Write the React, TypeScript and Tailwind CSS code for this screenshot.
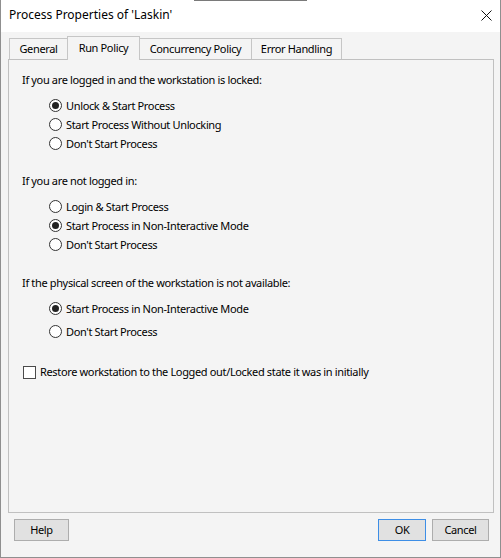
import React from "react";

function Radio({ label, checked, h }: { label: string; checked?: boolean; h: string }) {
  return (
    <div className={`flex items-center pl-[27px] gap-[4px] ${h}`}>
      <span className="w-[13px] h-[13px] rounded-full border border-[#333333] bg-white flex items-center justify-center shrink-0">
        {checked && <span className="w-[7px] h-[7px] rounded-full bg-[#222222]" />}
      </span>
      <span>{label}</span>
    </div>
  );
}

function Tab({ label, w, selected, first }: { label: string; w: string; selected?: boolean; first?: boolean }) {
  return (
    <div
      className={`${w} ${first ? "" : "-ml-px"} border border-b-0 border-[#c6c6c6] bg-[#f4f4f4] flex items-center justify-center ${
        selected ? "h-[24px] mb-[-1px] relative z-10 pb-[2px]" : "h-[21px]"
      }`}
    >
      {label}
    </div>
  );
}

export default function App() {
  return (
    <div className="w-[501px] h-[558px] relative flex flex-col bg-[#f4f4f4] border-x border-b border-[#8f8f8f] font-['Noto_Sans',sans-serif] text-[11px] tracking-[-0.35px] text-black leading-[16px]">
      <div className="absolute top-0 left-[193px] w-[113px] h-px bg-[#7a7a7a]" />
      <div className="h-[32px] bg-white flex items-center justify-between pl-[8px] pr-[8px] shrink-0 text-[12px] tracking-normal">
        <span className="-mt-[2px]">Process Properties of 'Laskin'</span>
        <svg width="11" height="11" viewBox="0 0 11 11" className="-mt-[1px]">
          <path d="M0.5 0.5 L10.5 10.5 M10.5 0.5 L0.5 10.5" stroke="#111" strokeWidth="1" />
        </svg>
      </div>
      <div className="flex flex-col pl-[7px]">
        <div className="h-[27px] pt-[4px] flex items-end pl-[1px]">
          <Tab label="General" w="w-[59px]" first />
          <Tab label="Run Policy" w="w-[73px]" selected />
          <Tab label="Concurrency Policy" w="w-[113px]" />
          <Tab label="Error Handling" w="w-[91px]" />
        </div>
        <div className="w-[486px] h-[454px] border border-[#c0c0c0] pl-[13px] pt-[10px] flex flex-col">
          <div className="h-[20px] flex items-center">If you are logged in and the workstation is locked:</div>
          <div className="mt-[6px] flex flex-col">
            <Radio h="h-[19px]" label="Unlock & Start Process" checked />
            <Radio h="h-[19px]" label="Start Process Without Unlocking" />
            <Radio h="h-[19px]" label="Don't Start Process" />
          </div>
          <div className="mt-[18px] h-[20px] flex items-center">If you are not logged in:</div>
          <div className="mt-[6px] flex flex-col">
            <Radio h="h-[19px]" label="Login & Start Process" />
            <Radio h="h-[19px]" label="Start Process in Non-Interactive Mode" checked />
            <Radio h="h-[19px]" label="Don't Start Process" />
          </div>
          <div className="mt-[19px] h-[20px] flex items-center">If the physical screen of the workstation is not available:</div>
          <div className="mt-[4px] flex flex-col">
            <Radio h="h-[23px]" label="Start Process in Non-Interactive Mode" checked />
            <Radio h="h-[23px]" label="Don't Start Process" />
          </div>
          <div className="mt-[19px] h-[20px] flex items-center gap-[4px] pl-px">
            <span className="w-[13px] h-[13px] border border-[#4a4a4a] bg-white shrink-0" />
            <span>Restore workstation to the Logged out/Locked state it was in initially</span>
          </div>
        </div>
        <div className="w-[486px] mt-[6px] flex justify-between px-[6px]">
          <button className="w-[55px] h-[22px] bg-[#e1e1e1] border border-[#adadad] flex items-center justify-center">Help</button>
          <div className="flex gap-[6px] -mr-[1px]">
            <button className="w-[48px] h-[22px] bg-[#e1e1e1] border border-[#3d8ee6] flex items-center justify-center">OK</button>
            <button className="w-[57px] h-[22px] bg-[#e1e1e1] border border-[#adadad] flex items-center justify-center">Cancel</button>
          </div>
        </div>
      </div>
    </div>
  );
}
